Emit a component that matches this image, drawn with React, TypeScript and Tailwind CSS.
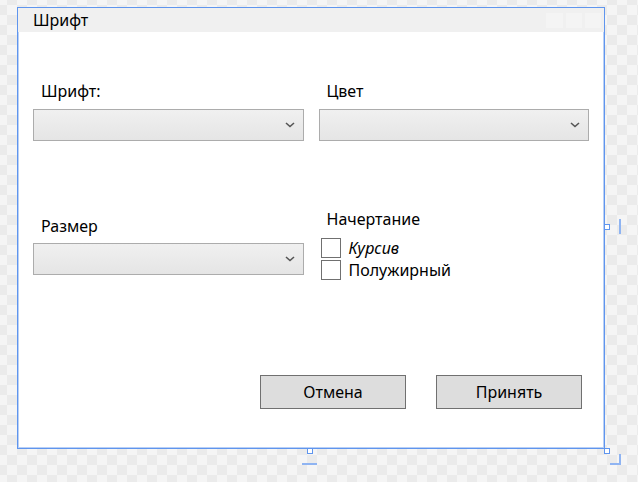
import React from "react";

function Chevron() {
  return (
    <svg width="10" height="6" viewBox="0 0 10 6" className="shrink-0">
      <path d="M1 1 L5 4.5 L9 1" fill="none" stroke="#555" strokeWidth="1.6" />
    </svg>
  );
}

function Combo() {
  return (
    <div className="h-[32px] w-full border border-[#acacac] bg-gradient-to-b from-[#f0f0f0] to-[#e5e5e5] flex items-center justify-end pr-[8px]">
      <Chevron />
    </div>
  );
}

function Check({ label, italic }: { label: string; italic?: boolean }) {
  return (
    <div className="flex items-center h-[22px]">
      <div className="w-[20px] h-[20px] border border-[#707070] bg-white shrink-0" />
      <span className={"ml-[8px] text-[16px] text-black " + (italic ? "italic" : "")}>{label}</span>
    </div>
  );
}

function Button({ label }: { label: string }) {
  return (
    <div className="w-[146px] h-[34px] border border-[#707070] bg-[#dddddd] flex items-center justify-center text-[16px] text-black">
      {label}
    </div>
  );
}

export default function App() {
  return (
    <div
      className="relative w-[638px] h-[482px] overflow-hidden bg-[#f3f3f3] bg-[repeating-conic-gradient(#ebebeb_0_25%,#f5f5f5_0_50%)] bg-[length:20px_20px] bg-[position:7px_5px]"
      style={{ fontFamily: '"Noto Sans", "Open Sans", sans-serif' }}
    >
      <div className="ml-[17px] mt-[7px] w-[588px] h-[442px] border border-[#5f95ee] shadow-[inset_0_0_0_1px_#b9d0f6] bg-white flex flex-col">
        <div className="h-[24px] bg-[#f0f0f0] flex items-center pl-[15px] pr-[3px] shrink-0">
          <span className="text-[16px] text-black leading-none">Шрифт</span>
          <div className="ml-auto flex gap-[3px]">
            <div className="w-[17px] h-[15px] bg-[#f4f4f4]" />
            <div className="w-[16px] h-[15px] bg-[#f4f4f4]" />
            <div className="w-[16px] h-[15px] bg-[#f4f4f4]" />
          </div>
        </div>
        <div className="px-[15px] grid grid-cols-2 gap-x-[15px]">
          <div className="pt-[48px]">
            <div className="pl-[8px] h-[22px] text-[16px] leading-[22px] text-black">Шрифт:</div>
            <div className="mt-[7px]"><Combo /></div>
          </div>
          <div className="pt-[48px]">
            <div className="pl-[8px] h-[22px] text-[16px] leading-[22px] text-black">Цвет</div>
            <div className="mt-[7px]"><Combo /></div>
          </div>
          <div className="pt-[74px]">
            <div className="pl-[8px] h-[22px] text-[16px] leading-[22px] text-black">Размер</div>
            <div className="mt-[6px]"><Combo /></div>
          </div>
          <div className="pt-[67px]">
            <div className="pl-[8px] h-[22px] text-[16px] leading-[22px] text-black">Начертание</div>
            <div className="mt-[7px] pl-[2px] flex flex-col">
              <Check label="Курсив" italic />
              <Check label="Полужирный" />
            </div>
          </div>
        </div>
        <div className="mt-[94px] flex justify-end gap-[30px] pr-[22px]">
          <Button label="Отмена" />
          <Button label="Принять" />
        </div>
      </div>
      {/* selection handles */}
      <div className="absolute left-[604px] top-[224px] w-[6px] h-[6px] border border-[#5f95ee] bg-white" />
      <div className="absolute left-[619px] top-[219px] w-[2px] h-[15px] bg-[#8fb4f2]" />
      <div className="absolute left-[307px] top-[448px] w-[6px] h-[6px] border border-[#5f95ee] bg-white" />
      <div className="absolute left-[302px] top-[463px] w-[15px] h-[2px] bg-[#8fb4f2]" />
      <div className="absolute left-[604px] top-[448px] w-[6px] h-[6px] border border-[#5f95ee] bg-white" />
      <div className="absolute left-[619px] top-[454px] w-[2px] h-[11px] bg-[#8fb4f2]" />
      <div className="absolute left-[610px] top-[463px] w-[11px] h-[2px] bg-[#8fb4f2]" />
    </div>
  );
}
